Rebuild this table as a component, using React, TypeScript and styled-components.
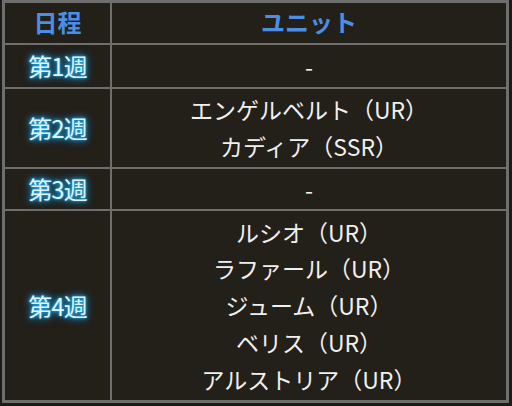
import React from "react";
import styled, { createGlobalStyle } from "styled-components";

const GlobalStyle = createGlobalStyle`
  html, body {
    margin: 0;
    padding: 0;
    background: #1d1b17;
  }
  body {
    font-family: "Noto Sans CJK JP", "Noto Sans", sans-serif;
  }
`;

const Wrap = styled.div`
  width: 512px;
  height: 406px;
  padding-left: 2px;
  box-sizing: border-box;
`;

const Table = styled.div`
  display: grid;
  grid-template-columns: 105px 394px;
  grid-template-rows: 40px 42px 78px 40px 189px;
  gap: 2px;
  width: 507px;
  box-sizing: border-box;
  border: 3px solid #6e6e6c;
  background: #6e6e6c;
`;

const Cell = styled.div`
  background: #231f19;
  display: flex;
  flex-direction: column;
  align-items: center;
  justify-content: center;
`;

const HeadText = styled.div`
  color: #4a8fe4;
  font-size: 24px;
  font-weight: 700;
  line-height: 1;
  margin-top: -2px;
`;

const WeekText = styled.div`
  color: #dcf6ff;
  font-size: 24px;
  font-weight: 400;
  line-height: 1;
  letter-spacing: -1px;
  text-shadow: 0 0 3px #2bb4f0, 0 0 6px #1e9ce0, 0 0 10px #1780c0;
`;

const UnitLine = styled.div<{ $lh: number }>`
  color: #f0f0ee;
  font-size: 23px;
  font-weight: 400;
  line-height: ${(p) => p.$lh}px;
  white-space: nowrap;
`;

const weeks: { label: string; units: string[] }[] = [
  { label: "第1週", units: ["-"] },
  { label: "第2週", units: ["エンゲルベルト（UR）", "カディア（SSR）"] },
  { label: "第3週", units: ["-"] },
  {
    label: "第4週",
    units: [
      "ルシオ（UR）",
      "ラファール（UR）",
      "ジューム（UR）",
      "ベリス（UR）",
      "アルストリア（UR）",
    ],
  },
];

export default function App() {
  return (
    <Wrap>
      <GlobalStyle />
      <Table>
        <Cell>
          <HeadText>日程</HeadText>
        </Cell>
        <Cell>
          <HeadText>ユニット</HeadText>
        </Cell>
        {weeks.map((w) => (
          <React.Fragment key={w.label}>
            <Cell>
              <WeekText>{w.label}</WeekText>
            </Cell>
            <Cell>
              {w.units.map((u, i) => (
                <UnitLine key={i} $lh={w.units.length > 1 ? 36.7 : 30}>
                  {u}
                </UnitLine>
              ))}
            </Cell>
          </React.Fragment>
        ))}
      </Table>
    </Wrap>
  );
}
